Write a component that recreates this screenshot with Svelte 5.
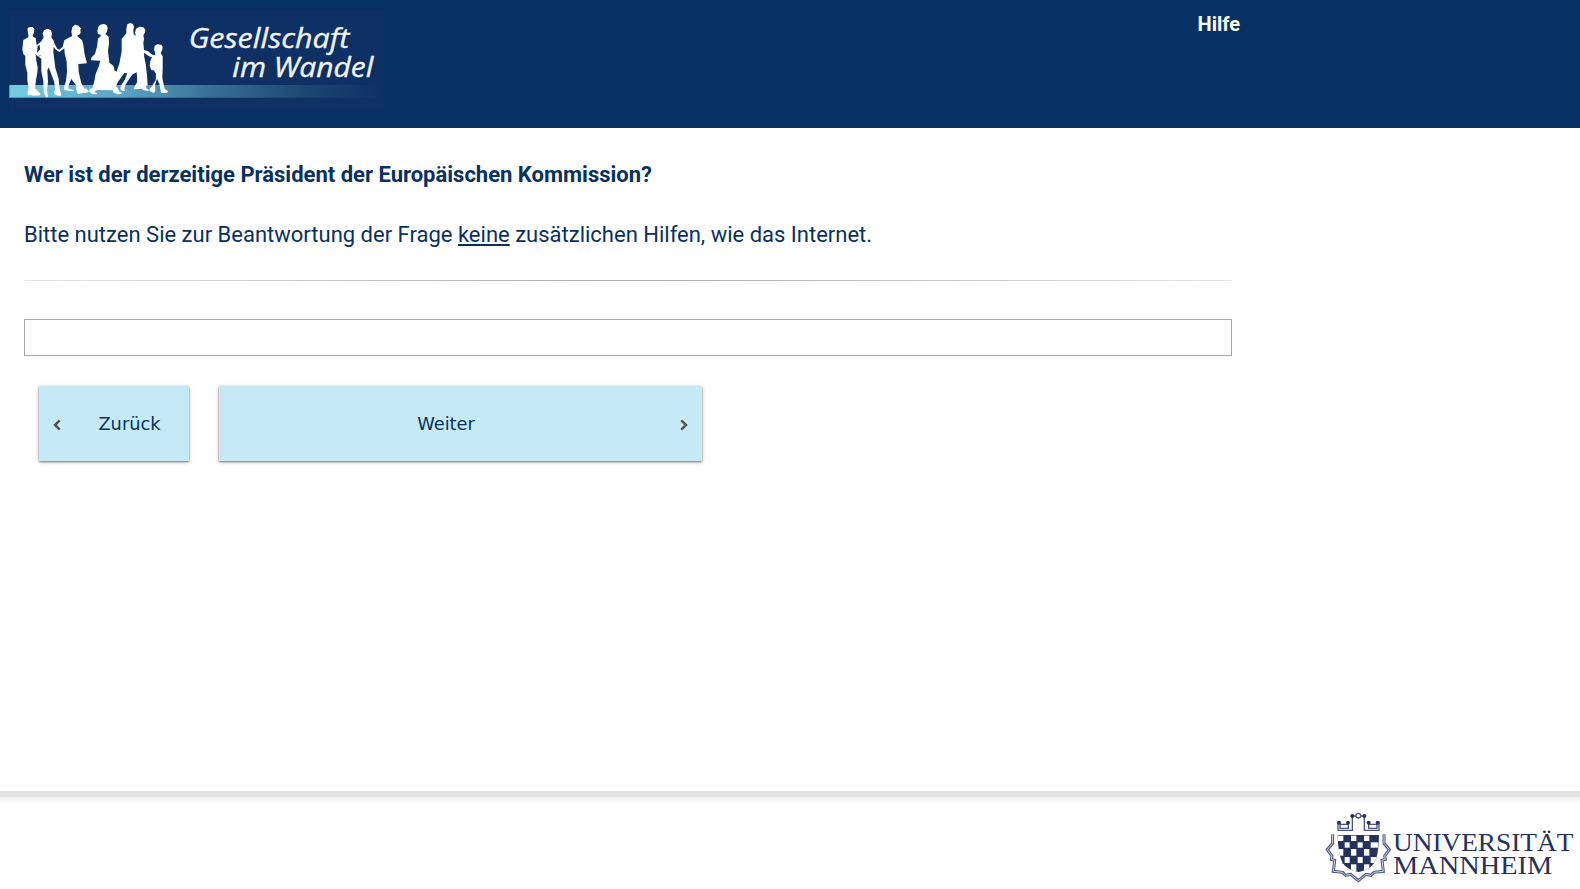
<script>
  let answer = $state('');

  // Crest checkerboard: column and row edges
  const cols = [82, 102, 121, 141, 160, 180, 207];
  const rows = [165, 185, 205, 229, 251, 276];
  const cells = [];
  for (let r = 0; r < 5; r++) {
    for (let c = 0; c < 6; c++) {
      cells.push({ x: cols[c] + 2, y: rows[r] + 2, w: cols[c + 1] - cols[c] - 4, h: rows[r + 1] - rows[r] - 4, dark: (r + c) % 2 === 1 });
    }
  }
</script>

<div class="page">
  <header>
    <svg class="brand" width="375" height="101" viewBox="27 30 1125 303" role="img" aria-label="Gesellschaft im Wandel">
      <defs>
        <linearGradient id="strip">
          <stop offset="0" stop-color="#73cce2" />
          <stop offset=".3" stop-color="#5ba6c3" />
          <stop offset=".55" stop-color="#386f94" />
          <stop offset=".8" stop-color="#1c4772" />
          <stop offset="1" stop-color="#0f3064" />
        </linearGradient>
      </defs>
      <rect x="27" y="30" width="1125" height="303" fill="#0f3064" />
      <rect x="28" y="255" width="1112" height="38" fill="url(#strip)" />
      <g fill="#fff">
        <g transform="translate(54 60)">
          <path d="M28 27 32 22 44 21 49 27 48 38 45 44 45 50 53 54 56 76 70 64 77 52 74 40 78 31 88 26 98 30 102 40 100 52 107 62 110 72 118 86 124 89 134 80 139 61 152 53 163 48 160 36 163 21 171 14 182 17 185 22 190 25 187 29 188 38 184 44 178 46 180 51 192 60 196 74 200 104 207 130 181 132 182 156 190 190 200 207 207 211 205 217 180 222 176 214 174 196 160 177 151 197 152 206 168 211 164 214 139 210 138 202 144 182 147 156 146 125 140 100 139 85 124 96 112 88 107 80 106 96 109 119 112 144 122 176 125 210 130 223 127 228 111 225 108 218 112 206 108 184 92 142 88 151 90 186 87 210 90 232 84 232 77 215 76 184 70 154 70 116 58 108 53 102 55 122 59 142 58 158 54 179 51 205 60 214 68 222 66 226 53 227 30 225 28 220 32 204 28 182 28 159 22 135 22 108 16 102 13 88 16 60 31 52 31 44Z" />
        </g>
        <path d="M113 137 119 135 120 148 111 159Z" fill="#0f3064" />
        <path d="M114 171 122 164 121 168Z" fill="#0f3064" />
        <g transform="translate(252 60)">
          <path d="M43 20Q48 11 60 12 70 14 71 24L69 35 64 42 74 50 75 70 72 92 76 128 86 136 90 142 91 151 98 155 101 145 106 131 113 94 113 57 127 40 127 26 130 13 138 9 147 12 150 20 148 31 149 43 156 47 153 38 156 26 166 20 178 22 184 29 183 37 178 46 180 57 178 68 180 90 192 94 205 104 214 106 213 97 210 90 212 78 219 73 232 74 236 80 235 89 230 99 236 109 236 147 235 174 242 207 252 213 250 218 232 219 230 212 226 191 219 176 213 196 214 214 209 219 196 212 197 206 204 199 215 180 216 161 209 151 202 150 197 137 200 119 204 112 195 109 180 98 182 143 180 159 186 195 187 205 194 209 194 213 179 211 174 206 150 208 149 204 162 201 160 180 158 157 146 163 134 179 124 195 121 207 123 213 116 214 109 206 110 197 122 180 130 160 121 159 103 184 96 197 102 205 105 214 113 218 112 222 100 223 88 217 86 211 39 210 30 216 40 219 38 223 24 222 15 214 17 207 25 205 31 184 35 162 45 137 49 122 21 121 22 113 33 101 39 80 42 56 50 49 50 44 42 42 40 33Z" />
          <path d="M88 212 113 161 102 158 87 180Z" />
          <path d="M5 204 14 213 12 217 0 220Z" />
        </g>
        <path d="M431 166 437 191 441 225 443 256 427 258 426 214 420 202Z" />
      </g>
      <path d="M415 208 420 218 424 240 425 261 402 263 411 247Z" fill="#fff" />
      <g class="brand-text">
        <text x="566" y="145" textLength="482" lengthAdjust="spacingAndGlyphs">Gesellschaft</text>
        <text x="697" y="230" textLength="423" lengthAdjust="spacingAndGlyphs">im Wandel</text>
      </g>
    </svg>
    <a class="help" href="#hilfe">Hilfe</a>
  </header>

  <main>
    <h1>Wer ist der derzeitige Präsident der Europäischen Kommission?</h1>
    <p>Bitte nutzen Sie zur Beantwortung der Frage <u>keine</u> zusätzlichen Hilfen, wie das Internet.</p>
    <div class="divider"></div>
    <input type="text" aria-label="Antwort" bind:value={answer} />
    <nav>
      <button class="back">
        <svg width="8" height="12" viewBox="0 0 8 12"><path d="M6.7 1.4 2 6l4.7 4.6" /></svg>
        <span>Zurück</span>
      </button>
      <button class="next">
        <span>Weiter</span>
        <svg width="8" height="12" viewBox="0 0 8 12"><path d="M1.3 1.4 6 6l-4.7 4.6" /></svg>
      </button>
    </nav>
  </main>

  <footer>
    <svg width="270" height="98" viewBox="0 33 810 294" role="img" aria-label="Universität Mannheim">
      <defs>
        <clipPath id="shield"><path d="M82 165H207Q206 230 191 251Q176 270 146 276Q113 270 98 250Q85 225 82 165Z" /></clipPath>
      </defs>
      <g fill="none" stroke="#4a5680" stroke-width="4">
        <path d="M84 151V127M82 151H127V108M207 151V127M209 151H163V108M90 133H115V145H90ZM176 133H201V145H176ZM127 108H138M151 108H163" />
        <circle cx="145" cy="107" r="7" />
      </g>
      <g fill="#25315f">
        <circle cx="87" cy="128" r="6" /><circle cx="114" cy="128" r="6" /><circle cx="176" cy="128" r="6" /><circle cx="203" cy="128" r="6" />
        <circle cx="127" cy="108" r="6" /><circle cx="163" cy="108" r="6" />
      </g>
      <path class="outline" d="M68 163V190L52 209L66 228L64 238L74 241L70 274L98 277L107 286L122 283L145 302L168 283L183 286L192 277L220 274L216 241L226 238L224 228L238 209L222 190V163" />
      <path class="outline-gap" d="M68 163V190L52 209L66 228L64 238L74 241L70 274L98 277L107 286L122 283L145 302L168 283L183 286L192 277L220 274L216 241L226 238L224 228L238 209L222 190V163" />
      <g clip-path="url(#shield)">
        <rect x="82" y="165" width="125" height="112" fill="#25315f" />
        {#each cells as cell}
          {#if !cell.dark}<rect x={cell.x} y={cell.y} width={cell.w} height={cell.h} fill="#fff" />{/if}
        {/each}
      </g>
      <g class="university">
        <text x="249" y="213" textLength="541" lengthAdjust="spacingAndGlyphs">UNIVERSITÄT</text>
        <text x="249" y="281" textLength="478" lengthAdjust="spacingAndGlyphs">MANNHEIM</text>
      </g>
    </svg>
  </footer>
</div>

<style>
  :global(body) { margin: 0; background: #fff; }
  .page { height: 889px; display: flex; flex-direction: column; overflow: hidden; color: #083163; font-family: Roboto, sans-serif; }
  header { box-sizing: border-box; height: 128px; flex: none; background: #083163; display: flex; align-items: flex-start; justify-content: space-between; padding: 10px 340px 0 9px; }
  .brand { display: block; }
  .brand-text { fill: #f1f4f8; font: italic 80px "Open Sans", sans-serif; stroke: #f1f4f8; stroke-width: 1; }
  .help { color: #fff; font-weight: 700; font-size: 20px; line-height: 28px; text-decoration: none; }
  main { flex: 1; width: 1208px; padding: 32px 24px 0; }
  h1 { margin: 0; font-size: 22px; line-height: 30px; font-weight: 700; }
  p { margin: 30px 0 0; font-size: 22px; line-height: 30px; }
  u { text-underline-offset: 1.5px; text-decoration-thickness: 2px; text-decoration-skip-ink: none; }
  .divider { height: 1px; margin-top: 30px; background: linear-gradient(90deg, #e4e4e4, #aaa 50%, #e4e4e4); }
  input { display: block; box-sizing: border-box; width: 100%; height: 37px; margin-top: 38px; padding: 4px 8px; border: 1px solid #aaa; border-radius: 0; background: #fff; font: 20px Roboto, sans-serif; color: inherit; outline: none; }
  nav { display: flex; gap: 30px; margin: 30px 0 0 15px; }
  button { box-sizing: border-box; height: 75px; display: flex; align-items: center; border: 0; padding: 0 14px; background: #c5e9f5; color: #083163; font: 17.8px "DejaVu Sans", sans-serif; box-shadow: 0 1px 2px rgba(0,0,0,.5), 0 1px 5px rgba(0,0,0,.16); }
  button span { flex: 1; text-align: center; }
  button svg { fill: none; stroke: #555; stroke-width: 2.5; margin-top: 2px; }
  .back { width: 150px; }
  .back span { padding-left: 23px; }
  .next { width: 483px; }
  .next span { padding-right: 21px; }
  footer { height: 98px; flex: none; display: flex; justify-content: flex-end; background: linear-gradient(#e1e1e1 0 5px, #f2f2f2 7px, #fff 13px); }
  .outline { fill: none; stroke: #4a5680; stroke-width: 9; }
  .outline-gap { fill: none; stroke: #d4d8e3; stroke-width: 3; }
  .university { fill: #25315f; font: 76px "Liberation Serif", serif; }
</style>
